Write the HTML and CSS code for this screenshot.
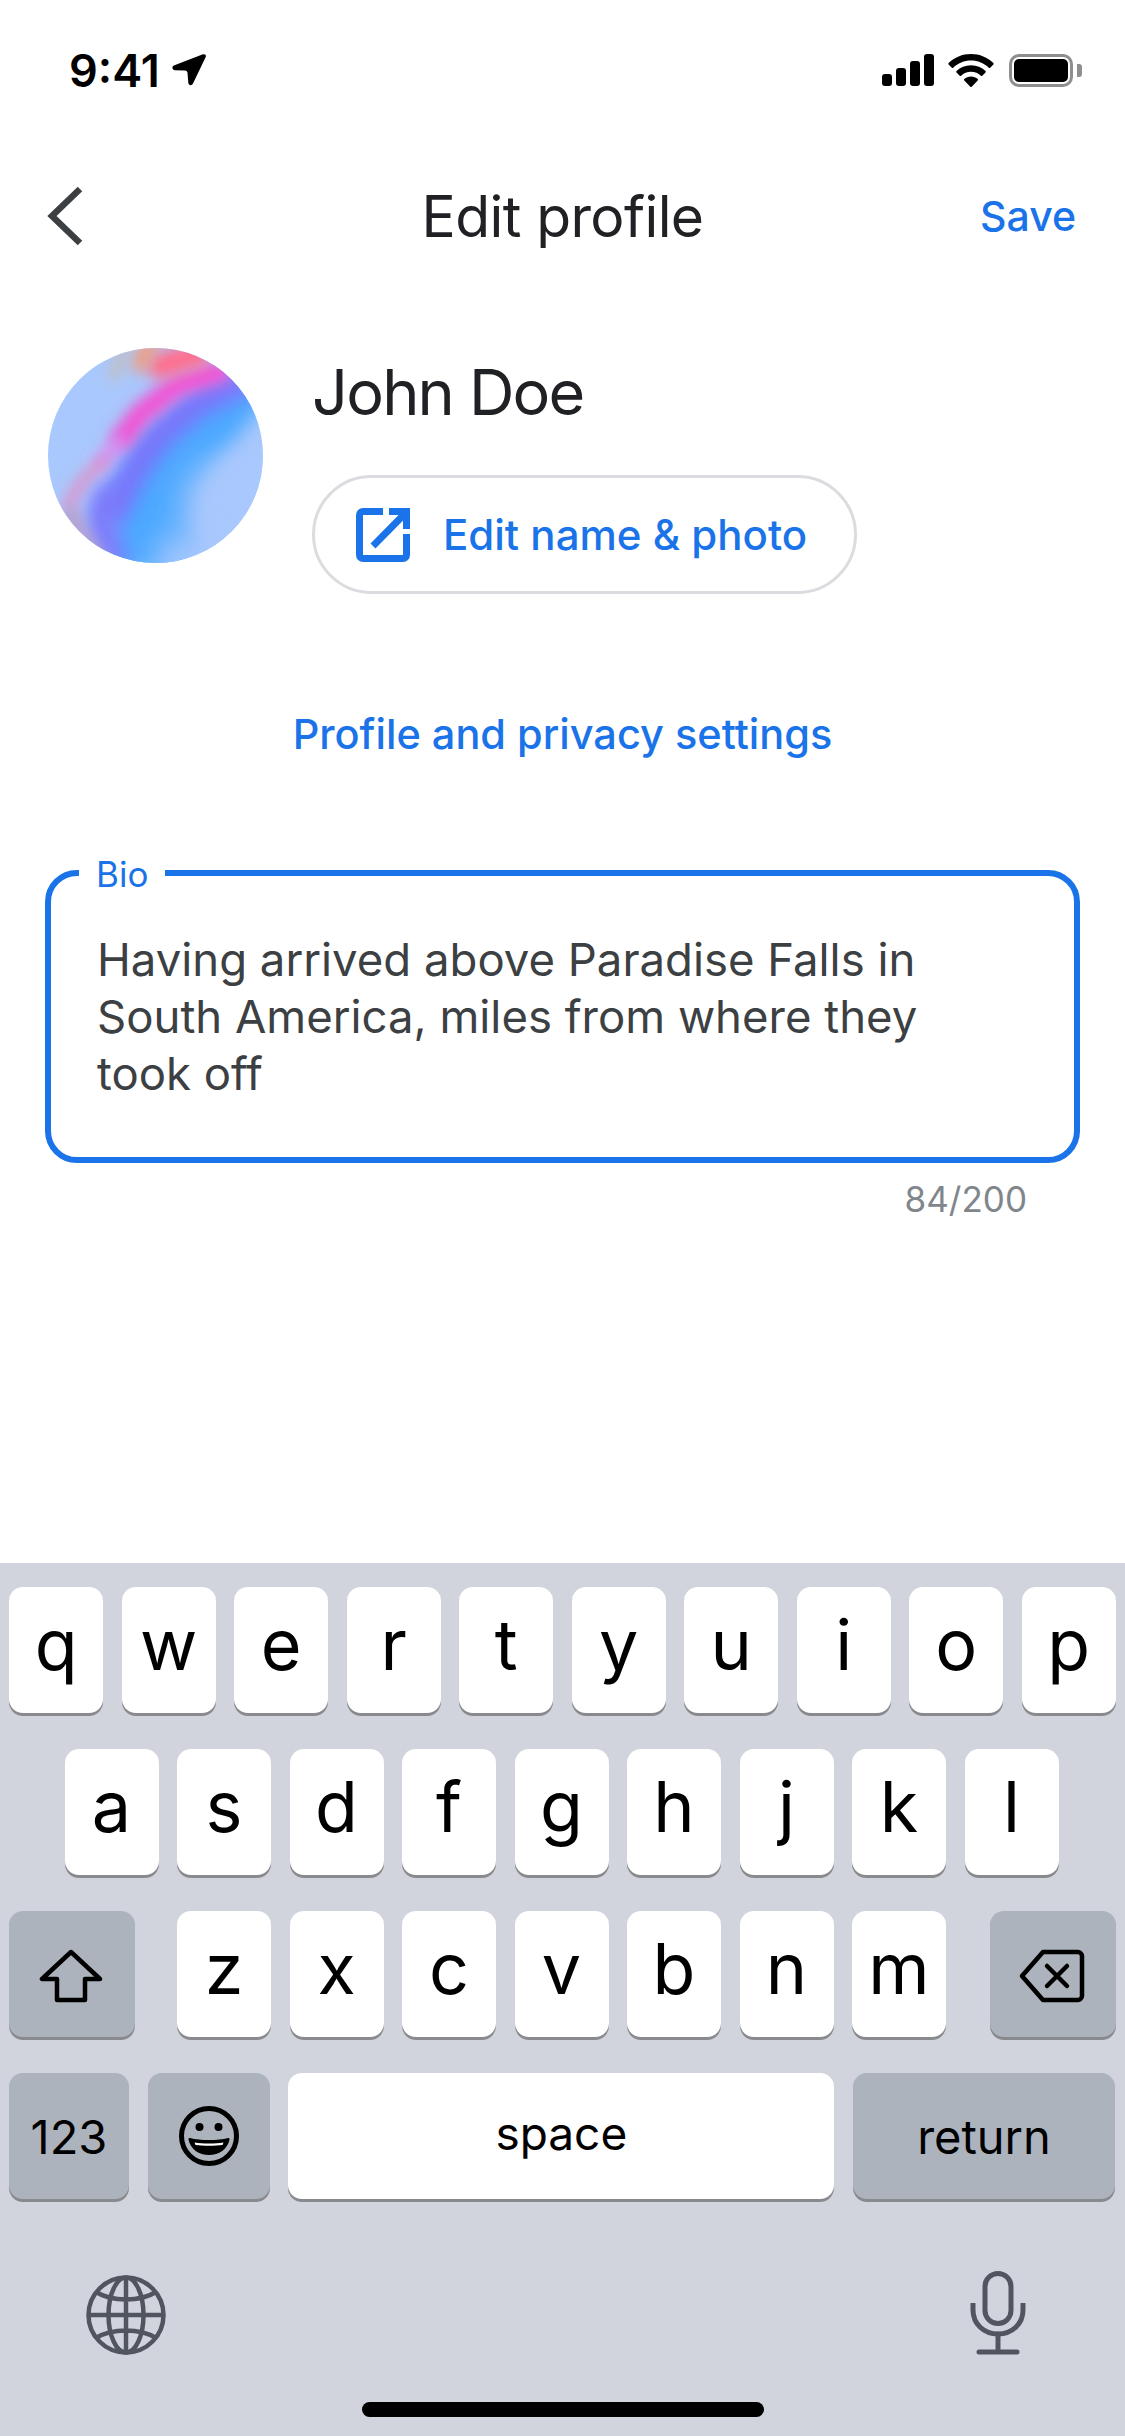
FILE: index.html
```html
<!DOCTYPE html>
<html lang="en">
<head>
    <meta charset="UTF-8">
    <title>Edit profile</title>
    <link rel="stylesheet" href="styles.css">
</head>
<body>
    <div class="screen">
        <div class="status-bar">
            <div class="status-left">
                <span class="status-time">9:41</span>
                <svg class="icon-location" viewBox="0 0 34 32"><path d="M31 .3c2-.6 3.500.7 2.700 2.700L21 29.500c-1.200 2.500-4.500 2-4.700-.7l-.8-9.800c-.1-1.500-.9-2.300-2.500-2.400l-10-.4C.2 16-.6 13 1.800 11.600z"/></svg>
            </div>
            <div class="status-right">
                <svg class="icon-signal" viewBox="0 0 52 32"><rect x="0" y="20" width="10" height="12" rx="3"/><rect x="14" y="14" width="10" height="18" rx="3"/><rect x="28" y="7" width="10" height="25" rx="3"/><rect x="42" y="0" width="10" height="32" rx="3"/></svg>
                <svg class="icon-wifi" viewBox="0 0 46 33"><path d="M23 0c8.700 0 16.600 3.400 22.400 9 .4.400.4 1 0 1.400l-3.200 3.300c-.4.400-1 .4-1.400 0C36.200 9.300 29.900 6.600 23 6.600S9.800 9.300 5.200 13.700c-.4.400-1 .4-1.400 0L.6 10.400c-.4-.4-.4-1 0-1.400C6.400 3.400 14.300 0 23 0z"/><path d="M23 11.300c5.600 0 10.700 2.200 14.500 5.700.4.400.4 1 0 1.400l-3.200 3.300c-.4.400-1 .4-1.400 0-2.600-2.400-6.100-3.900-9.900-3.900s-7.300 1.500-9.900 3.900c-.4.400-1 .4-1.400 0l-3.200-3.300c-.4-.4-.4-1 0-1.400 3.800-3.500 8.900-5.700 14.500-5.700z"/><path d="M23 22.500c2.600 0 5 1 6.700 2.600.4.400.4 1 0 1.400l-6 6.200c-.4.400-1 .4-1.400 0l-6-6.200c-.4-.4-.4-1 0-1.400 1.700-1.600 4.100-2.600 6.700-2.600z"/></svg>
                <div class="battery"><div class="battery-fill"></div></div>
            </div>
        </div>

        <div class="header">
            <svg class="icon-back" viewBox="0 0 36 60"><path d="M33 3 5 30l28 27" fill="none" stroke="#3c4043" stroke-width="6.500"/></svg>
            <h1 class="title">Edit profile</h1>
            <span class="save">Save</span>
        </div>

        <div class="profile">
            <svg class="avatar" viewBox="0 0 215 215">
                <defs>
                    <clipPath id="avatar-clip"><circle cx="107.500" cy="107.500" r="107.500"/></clipPath>
                    <filter id="blur-soft" filterUnits="userSpaceOnUse" x="-80" y="-80" width="375" height="375"><feGaussianBlur stdDeviation="16"/></filter>
                    <filter id="blur-mid" filterUnits="userSpaceOnUse" x="-80" y="-80" width="375" height="375"><feGaussianBlur stdDeviation="10"/></filter>
                    <filter id="blur-thin" filterUnits="userSpaceOnUse" x="-80" y="-80" width="375" height="375"><feGaussianBlur stdDeviation="7"/></filter>
                </defs>
                <g clip-path="url(#avatar-clip)" fill="none" stroke-linecap="round" stroke-linejoin="round">
                    <rect width="215" height="215" fill="#a9c8fd"/>
                    <path d="M235 30 150 45 90 95 62 150 60 225 140 225 165 120z" fill="#4ba9ff" filter="url(#blur-mid)"/>
                    <circle cx="185" cy="160" r="50" fill="#a9c8fd" filter="url(#blur-soft)"/>
                    <circle cx="135" cy="215" r="28" fill="#a9c8fd" filter="url(#blur-soft)"/>
                    <path d="M200 30 150 54 110 88 84 125 66 160" stroke="#7a72fb" stroke-width="28" filter="url(#blur-mid)"/>
                    <path d="M60 150 52 175 64 210" stroke="#7c78fb" stroke-width="28" filter="url(#blur-mid)"/>
                    <path d="M172 24 128 38 92 66 74 90" stroke="#f155d4" stroke-width="22" filter="url(#blur-thin)"/>
                    <path d="M70 94 54 114" stroke="#d98aef" stroke-width="14" filter="url(#blur-thin)"/>
                    <path d="M150 6 112 18" stroke="#ff7090" stroke-width="26" filter="url(#blur-thin)"/>
                    <path d="M102 -4 92 16" stroke="#ed9f86" stroke-width="18" filter="url(#blur-thin)"/>
                    <path d="M76 0 66 28" stroke="#c6bcb8" stroke-width="10" filter="url(#blur-thin)"/>
                    <path d="M54 114 32 136 20 158" stroke="#e58cc4" stroke-width="10" filter="url(#blur-thin)"/>
                    <path d="M22 165 32 188 50 212" stroke="#b99cca" stroke-width="16" filter="url(#blur-thin)"/>
                </g>
            </svg>
            <div class="profile-info">
                <div class="profile-name">John Doe</div>
                <div class="edit-button">
                    <svg class="icon-open" viewBox="0 0 54 54"><path d="M27 3.500H7a3.500 3.500 0 0 0-3.500 3.500v40A3.500 3.500 0 0 0 7 50.500h40a3.500 3.500 0 0 0 3.500-3.500V26" fill="none" stroke="#1a73e8" stroke-width="7"/><path d="M33 3.500h17.500V21M17 38 49 5.500" fill="none" stroke="#1a73e8" stroke-width="7"/></svg>
                    <span>Edit name &amp; photo</span>
                </div>
            </div>
        </div>

        <div class="privacy-link">Profile and privacy settings</div>

        <div class="bio-field">
            <span class="bio-label">Bio</span>
            <p class="bio-text">Having arrived above Paradise Falls in<br>South America, miles from where they<br>took off</p>
        </div>
        <div class="bio-count">84/200</div>

        <div class="keyboard">
            <div class="key-row">
                <div class="key">q</div><div class="key">w</div><div class="key">e</div><div class="key">r</div><div class="key">t</div><div class="key">y</div><div class="key">u</div><div class="key">i</div><div class="key">o</div><div class="key">p</div>
            </div>
            <div class="key-row key-row-home">
                <div class="key">a</div><div class="key">s</div><div class="key">d</div><div class="key">f</div><div class="key">g</div><div class="key">h</div><div class="key">j</div><div class="key">k</div><div class="key">l</div>
            </div>
            <div class="key-row key-row-split">
                <div class="key key-dark key-shift">
                    <svg class="icon-shift" viewBox="0 0 64 54"><path d="M32 3 3 30h15v21h28V30h15z" fill="none" stroke="#000" stroke-width="4.500" stroke-linejoin="round"/></svg>
                </div>
                <div class="key-group">
                    <div class="key">z</div><div class="key">x</div><div class="key">c</div><div class="key">v</div><div class="key">b</div><div class="key">n</div><div class="key">m</div>
                </div>
                <div class="key key-dark key-shift">
                    <svg class="icon-delete" viewBox="0 0 66 54"><path d="M24 3h35c2 0 4 2 4 4v40c0 2-2 4-4 4H24L3 27z" fill="none" stroke="#000" stroke-width="4.500" stroke-linejoin="round"/><path d="m28 17 20 20M48 17 28 37" fill="none" stroke="#000" stroke-width="4.500" stroke-linecap="round"/></svg>
                </div>
            </div>
            <div class="key-row key-row-bottom">
                <div class="key key-dark key-num">123</div>
                <div class="key key-dark key-emoji">
                    <svg class="icon-emoji" viewBox="0 0 60 60"><circle cx="30" cy="30" r="27.500" fill="none" stroke="#000" stroke-width="5"/><circle cx="20.500" cy="21" r="4"/><circle cx="39.500" cy="21" r="4"/><path d="M11 32c5 1.500 12 2 19 2s14-.5 19-2c1-.3 1.700.4 1.500 1.400C48.500 43 40 49 30 49S11.500 43 9.500 33.400C9.300 32.400 10 31.700 11 32z"/><path d="M15.500 36.500c4 .7 9 1 14.500 1s10.500-.3 14.500-1l-1 2.500c-4 .5-8.500.7-13.500.7s-9.500-.2-13.500-.7z" fill="#fff"/></svg>
                </div>
                <div class="key key-space">space</div>
                <div class="key key-dark key-return">return</div>
            </div>
            <div class="keyboard-tools">
                <svg class="icon-globe" viewBox="0 0 80 80" fill="none" stroke="#50555f" stroke-width="4.500"><circle cx="40" cy="40" r="37.500"/><ellipse cx="40" cy="40" rx="17.500" ry="37.500"/><path d="M40 2v76M2 40h76M10 17c8 5 18 7.500 30 7.500S62 22 70 17M10 63c8-5 18-7.500 30-7.500S62 58 70 63"/></svg>
                <svg class="icon-mic" viewBox="0 0 56 84" fill="none" stroke="#50555f" stroke-width="5"><rect x="15" y="2.500" width="26" height="50" rx="13"/><path d="M3 32v7c0 14 11 24 25 24s25-10 25-24v-7"/><path d="M28 63v16M9 81h38" stroke-linecap="round"/></svg>
            </div>
            <div class="home-indicator"></div>
        </div>
    </div>
</body>
</html>
```

FILE: styles.css
```css
* {
    box-sizing: border-box;
}

body {
    margin: 0;
    background-color: #fff;
    font-family: Inter, "Liberation Sans", sans-serif;
    color: #202124;
}

.screen {
    width: 1125px;
    height: 2436px;
    display: flex;
    flex-direction: column;
    overflow: hidden;
}

/* status bar */
.status-bar {
    height: 52px;
    margin-top: 44px;
    padding: 0 43px 0 69px;
    display: flex;
    justify-content: space-between;
    align-items: center;
}

.status-left,
.status-right {
    display: flex;
    align-items: center;
}

.status-time {
    font-size: 45px;
    font-weight: 600;
    color: #000;
}

.icon-location {
    width: 34px;
    height: 32px;
    margin-left: 12px;
}

.icon-signal {
    width: 52px;
    height: 32px;
}

.icon-wifi {
    width: 46px;
    height: 33px;
    margin-left: 14px;
}

.battery {
    position: relative;
    width: 64px;
    height: 33px;
    margin-left: 15px;
    margin-right: 9px;
    padding: 2px;
    border: 3px solid #8e8e8e;
    border-radius: 10px;
}

.battery::after {
    content: "";
    position: absolute;
    right: -12px;
    top: 7px;
    width: 5px;
    height: 13px;
    border-radius: 0 3px 3px 0;
    background-color: #8e8e8e;
}

.battery-fill {
    height: 100%;
    border-radius: 5px;
    background-color: #000;
}

/* header */
.header {
    position: relative;
    height: 64px;
    margin-top: 88px;
    padding: 0 49px 0 47px;
    display: flex;
    justify-content: space-between;
    align-items: center;
}

.icon-back {
    width: 36px;
    height: 60px;
}

.title {
    position: absolute;
    left: 0;
    right: 0;
    margin: 0;
    text-align: center;
    font-size: 57px;
    font-weight: 400;
    letter-spacing: -0.6px;
}

.save {
    font-size: 41px;
    font-weight: 500;
    color: #1a73e8;
}

/* profile */
.profile {
    margin-top: 100px;
    padding-left: 48px;
    display: flex;
    gap: 49px;
}

.avatar {
    width: 215px;
    height: 215px;
    flex-shrink: 0;
}

.profile-name {
    padding-top: 4px;
    font-size: 63px;
    line-height: 80px;
    letter-spacing: -1.800px;
}

.edit-button {
    width: 545px;
    height: 119px;
    margin-top: 43px;
    padding-left: 41px;
    display: flex;
    align-items: center;
    gap: 33px;
    border: 3px solid #dadce0;
    border-radius: 60px;
    font-size: 42px;
    font-weight: 500;
    color: #1a73e8;
}

.icon-open {
    width: 54px;
    height: 54px;
}

.privacy-link {
    margin-top: 115px;
    text-align: center;
    font-size: 41.500px;
    line-height: 50px;
    font-weight: 500;
    color: #1a73e8;
}

/* bio */
.bio-field {
    position: relative;
    height: 293px;
    margin: 111px 45px 0;
    padding: 55px 46px 0;
    border: 6px solid #1a73e8;
    border-radius: 32px;
}

.bio-label {
    position: absolute;
    left: 28px;
    top: -24px;
    padding: 0 17px;
    background-color: #fff;
    font-size: 35px;
    line-height: 44px;
    color: #1a73e8;
}

.bio-text {
    margin: 0;
    font-size: 45.500px;
    line-height: 57px;
    color: #3c4043;
}

.bio-count {
    margin-top: 15px;
    padding-right: 98px;
    text-align: right;
    font-size: 35px;
    line-height: 42px;
    color: #80868b;
}

/* keyboard */
.keyboard {
    height: 873px;
    margin-top: auto;
    padding-top: 24px;
    display: flex;
    flex-direction: column;
    gap: 36px;
    background-color: #d1d4dc;
    color: #000;
}

.key-row {
    display: flex;
    justify-content: center;
    gap: 18.500px;
}

.key-row-home {
    padding-right: 2px;
}

.key-row-split {
    padding: 0 9px;
    justify-content: space-between;
}

.key-group {
    display: flex;
    gap: 18.500px;
    margin-right: 2px;
}

.key-row-bottom {
    padding: 0 10px 0 9px;
    justify-content: space-between;
    gap: 0;
}

.key {
    width: 94px;
    height: 126px;
    display: flex;
    align-items: center;
    justify-content: center;
    background-color: #fff;
    border-radius: 14px;
    box-shadow: 0 3px 0 #898a8d;
    font-size: 70px;
    padding-bottom: 12px;
}

.key-dark {
    background-color: #adb3bc;
}

.key-shift {
    width: 126px;
    padding: 4px 2px 0 0;
}

.key-num {
    width: 120px;
    font-size: 47px;
    padding-bottom: 0;
}

.key-emoji {
    width: 122px;
    padding-bottom: 0;
}

.key-space {
    width: 546px;
    font-size: 46px;
    padding-bottom: 6px;
}

.key-return {
    width: 262px;
    font-size: 47px;
    padding-bottom: 0;
}

.icon-shift {
    width: 64px;
    height: 54px;
}

.icon-delete {
    width: 66px;
    height: 54px;
}

.icon-emoji {
    width: 60px;
    height: 60px;
}

.keyboard-tools {
    margin-top: 36px;
    padding: 0 99px 0 86px;
    height: 84px;
    display: flex;
    justify-content: space-between;
    align-items: flex-end;
}

.icon-globe {
    width: 80px;
    height: 80px;
}

.icon-mic {
    width: 56px;
    height: 84px;
}

.home-indicator {
    width: 402px;
    height: 15px;
    margin: 11px auto 0;
    border-radius: 8px;
    background-color: #000;
}
```
